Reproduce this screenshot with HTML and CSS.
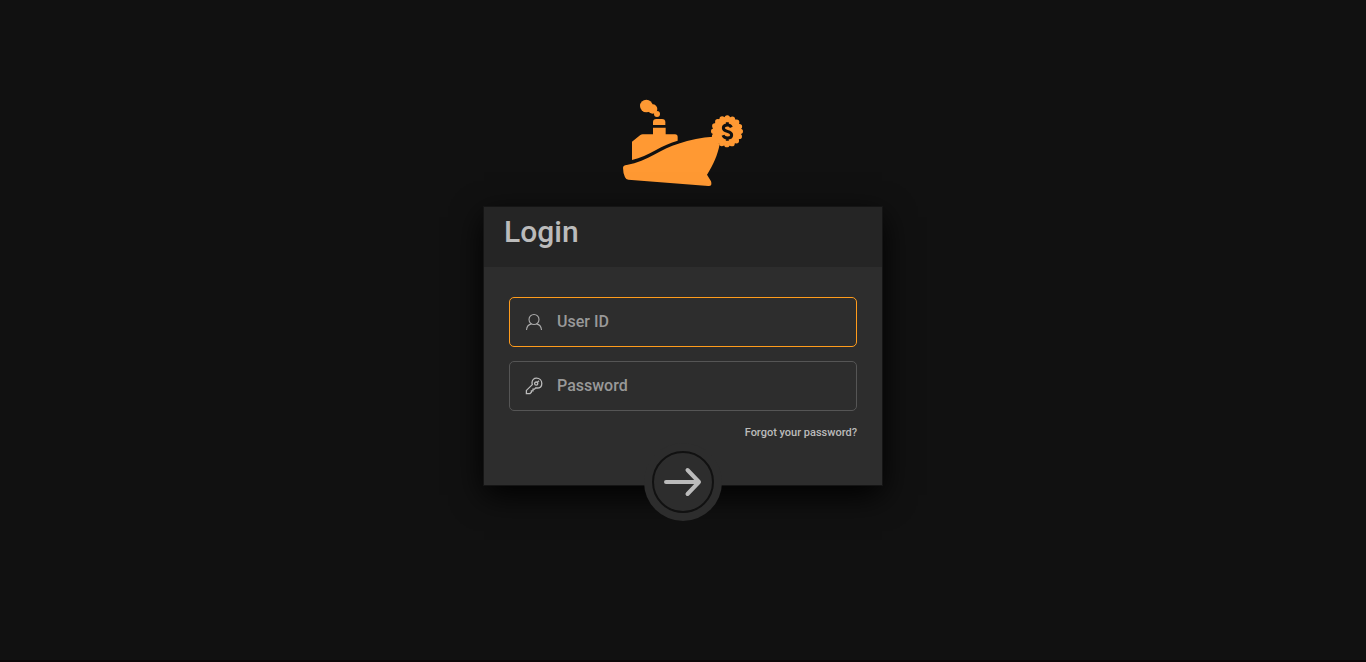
FILE: index.html
```html
<!DOCTYPE html>
<html lang="en">
<head>
<meta charset="utf-8">
<meta name="viewport" content="width=device-width, initial-scale=1">
<title>Login</title>
<link rel="stylesheet" href="styles.css">
</head>
<body>
<main class="page">
  <svg class="logo" viewBox="30 27 360 264" aria-hidden="true">
    <g fill="#ff9933">
      <circle cx="100" cy="48" r="19"/>
      <circle cx="119" cy="57" r="14"/>
      <circle cx="132" cy="72" r="9"/>
      <path d="M120 105V97Q120 87 130 87H147Q157 87 157 97V105Z"/>
      <path d="M57 210V155L82 135Q85 133 89 133H120V113H158V133H186Q194 133 194 141V152C150 162 107 199 57 210Z"/>
      <path d="M41 225C105 213 148 174 196 161C231 149 267 141 300 140L320 163C314 194 301 226 282 254L294 274Q299 289 286 288L46 269Q39 269 36 262Q30 249 30 233Q31 226 41 225Z"/>
      <circle cx="342" cy="124" r="43"/>
    </g>
    <circle class="seal-edge" cx="342" cy="124" r="40" pathLength="160"/>
    <path class="dollar" d="M355 112Q352 105 343 105Q331 105 331 114Q331 121 343 124Q356 127 356 135Q356 144 343 144Q333 144 330 136M343 97V105M343 144V152"/>
  </svg>

  <form class="card">
    <header class="card-header"><h1 class="title">Login</h1></header>
    <div class="card-body">
      <label class="field">
        <svg class="field-icon" viewBox="0 0 18 18" aria-hidden="true"><circle cx="9" cy="6.5" r="5"/><path d="M1.5 17C1.8 13.5 3.8 11.4 6.5 10.9M11.5 10.9C14.2 11.4 16.2 13.5 16.5 17"/></svg>
        <input class="input" type="text" name="user" placeholder="User ID" aria-label="User ID" autofocus>
      </label>
      <label class="field">
        <svg class="field-icon key" viewBox="0 0 18 18" aria-hidden="true"><path d="M7 6C7 2.8 9 1.2 11.5 1.2C14.6 1.2 16.8 3.4 16.8 6.4C16.8 9 15 11 12 11L10.6 10.9L9.6 12.2H8V13.8H6.4V15.3L5 16.6H1.4V13.4L7.3 7.6Z"/><circle cx="11.2" cy="6.6" r="1.6"/><path d="M12.4 5.4L14 3.8"/></svg>
        <input class="input" type="password" name="password" placeholder="Password" aria-label="Password">
      </label>
      <a class="forgot" href="#">Forgot your password?</a>
    </div>
    <button class="submit" type="submit" aria-label="Log in">
      <span class="ring">
        <svg class="arrow" viewBox="0 0 38 30" aria-hidden="true"><path d="M2 15H35M23.5 3L35 15L23.5 27"/></svg>
      </span>
    </button>
  </form>
</main>
</body>
</html>
```
FILE: styles.css
```css
* { box-sizing: border-box; }

body {
  margin: 0;
  background: #111;
  color: #bbb;
  font-family: Roboto, "Liberation Sans", sans-serif;
  font-weight: 500;
}

.page {
  min-height: 100vh;
  padding: 99px 16px 60px;
  display: flex;
  flex-direction: column;
  align-items: center;
  gap: 20px;
  border-bottom: 2px solid #0d0608;
}

.logo { width: 120px; height: 88px; }

.seal-edge {
  fill: none;
  stroke: #ff9933;
  stroke-width: 16;
  stroke-linecap: round;
  stroke-dasharray: 0 10;
}

.dollar {
  fill: none;
  stroke: #111;
  stroke-width: 9;
}

.card {
  position: relative;
  width: 100%;
  max-width: 398px;
  background: #2d2d2d;
  box-shadow: 0 0 0 1px #151515, 0 10px 30px #000;
}

.card-header {
  height: 60px;
  padding: 7px 20px;
  background: #252525;
}

.title {
  margin: 0;
  font-size: 30px;
  line-height: 36px;
  font-weight: 500;
}

.card-body {
  padding: 30px 25px 44px;
  display: flex;
  flex-direction: column;
  gap: 14px;
}

.field {
  height: 50px;
  padding: 0 15px;
  display: flex;
  align-items: center;
  gap: 14px;
  border: 1px solid #555;
  border-radius: 5px;
}

.field:focus-within { border-color: #ff9c1c; }

.field-icon {
  flex: none;
  width: 18px;
  height: 18px;
  fill: none;
  stroke: #aaa;
  stroke-width: 1.1;
}

.key { stroke: #bbb; stroke-width: 1.3; }

.input {
  flex: 1;
  min-width: 0;
  padding: 0;
  border: 0;
  outline: 0;
  background: none;
  color: #bbb;
  font: inherit;
  font-size: 16px;
  line-height: 24px;
  caret-color: transparent;
}

.input::placeholder { color: #999; opacity: 1; }

.forgot {
  align-self: flex-end;
  color: #bbb;
  font-size: 11px;
  line-height: 16px;
  text-decoration: none;
}

.submit {
  position: absolute;
  bottom: -36px;
  left: 50%;
  width: 78px;
  height: 78px;
  margin-left: -39px;
  padding: 8px;
  border: 0;
  border-radius: 50%;
  background: #2d2d2d;
  cursor: pointer;
}

.ring {
  display: flex;
  align-items: center;
  justify-content: center;
  height: 100%;
  border: 2px solid #111;
  border-radius: 50%;
}

.arrow {
  width: 38px;
  height: 30px;
  fill: none;
  stroke: #bbb;
  stroke-width: 4;
  stroke-linecap: round;
  stroke-linejoin: round;
}
```
